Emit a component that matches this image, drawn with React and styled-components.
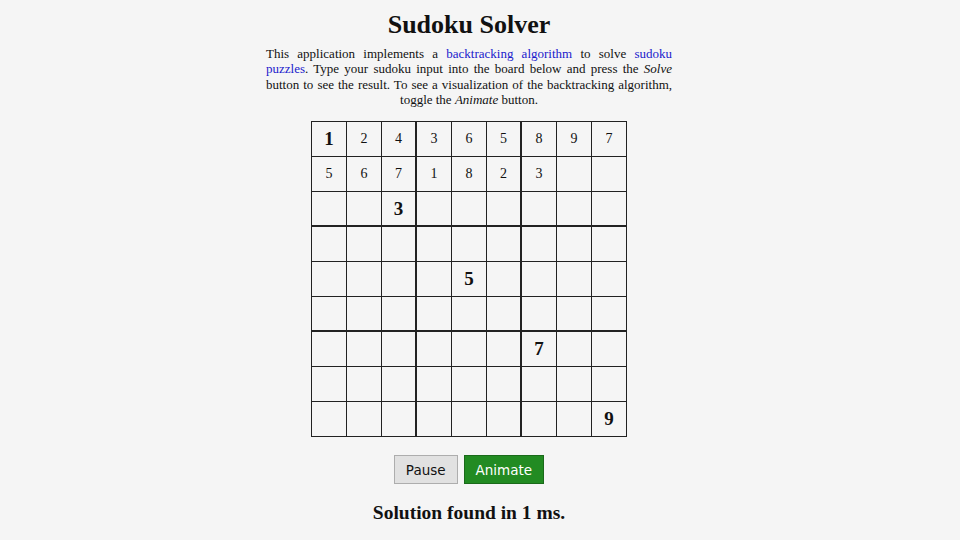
import React from 'react';
import styled, { createGlobalStyle } from 'styled-components';

const GlobalStyle = createGlobalStyle`
  html, body {
    margin: 0;
    background: #f5f5f5;
    font-family: "Liberation Serif", "Times New Roman", serif;
    color: #111;
  }
`;

const board = [
  ['1*', '2', '4', '3', '6', '5', '8', '9', '7'],
  ['5', '6', '7', '1', '8', '2', '3', '', ''],
  ['', '', '3*', '', '', '', '', '', ''],
  ['', '', '', '', '', '', '', '', ''],
  ['', '', '', '', '5*', '', '', '', ''],
  ['', '', '', '', '', '', '', '', ''],
  ['', '', '', '', '', '', '7*', '', ''],
  ['', '', '', '', '', '', '', '', ''],
  ['', '', '', '', '', '', '', '', '9*'],
];

const Page = styled.div`
  width: 938px;
  display: flex;
  flex-direction: column;
  align-items: center;
  padding-top: 8px;
`;

const Title = styled.h1`
  font-size: 26px;
  line-height: 34px;
  margin: 0 0 4px;
`;

const Intro = styled.p`
  width: 406px;
  margin: 0;
  font-size: 13px;
  line-height: 15.3px;
  text-align: justify;
  text-align-last: center;
`;

const Link = styled.a`
  color: #1a1acc;
  text-decoration: none;
`;

const Board = styled.div`
  display: grid;
  grid-template-columns: repeat(9, 35px);
  grid-auto-rows: 35px;
  border-left: 1px solid #222;
  border-top: 1px solid #222;
  margin-top: 14px;
`;

const Cell = styled.div`
  box-sizing: border-box;
  display: flex;
  align-items: center;
  justify-content: center;
  border-right: ${p => (p.$thickRight ? 2 : 1)}px solid #222;
  border-bottom: ${p => (p.$thickBottom ? 2 : 1)}px solid #222;
  font-size: ${p => (p.$given ? '19px' : '14px')};
  font-weight: ${p => (p.$given ? 'bold' : 'normal')};
`;

const Controls = styled.div`
  display: flex;
  gap: 6px;
  margin-top: 18px;
`;

const Button = styled.button`
  height: 29px;
  padding: 0 11px;
  font-family: "DejaVu Sans", Verdana, sans-serif;
  font-size: 13.5px;
  border: 1px solid ${p => (p.$primary ? '#1a6a1a' : '#adadad')};
  background: ${p => (p.$primary ? '#228b22' : '#e1e1e1')};
  color: ${p => (p.$primary ? '#fff' : '#111')};
`;

const Result = styled.h2`
  font-size: 19.5px;
  margin: 18px 0 0;
`;

export default function App() {
  return (
    <Page>
      <GlobalStyle />
      <Title>Sudoku Solver</Title>
      <Intro>
        This application implements a <Link href="#">backtracking algorithm</Link> to solve{' '}
        <Link href="#">sudoku puzzles</Link>. Type your sudoku input into the board below and
        press the <em>Solve</em> button to see the result. To see a visualization of the
        backtracking algorithm, toggle the <em>Animate</em> button.
      </Intro>
      <Board>
        {board.map((row, r) =>
          row.map((v, c) => (
            <Cell
              key={`${r}-${c}`}
              $given={v.endsWith('*')}
              $thickRight={c === 2 || c === 5}
              $thickBottom={r === 2 || r === 5}
            >
              {v.replace('*', '')}
            </Cell>
          ))
        )}
      </Board>
      <Controls>
        <Button>Pause</Button>
        <Button $primary>Animate</Button>
      </Controls>
      <Result>Solution found in 1 ms.</Result>
    </Page>
  );
}
